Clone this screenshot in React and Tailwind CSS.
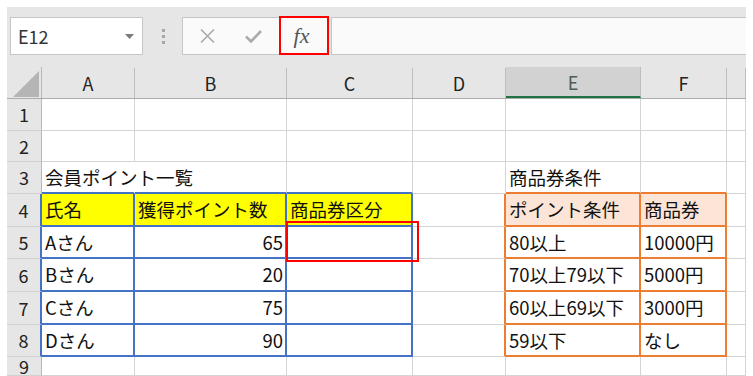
import React from "react";

const cols = [
  { key: "A", w: "w-[93px]" },
  { key: "B", w: "w-[152px]" },
  { key: "C", w: "w-[126px]" },
  { key: "D", w: "w-[93px]" },
  { key: "E", w: "w-[135px]" },
  { key: "F", w: "w-[86px]" },
  { key: "G", w: "flex-1" },
];

const rows = [
  { n: 1, h: "h-[32px]", cells: {} },
  { n: 2, h: "h-[31px]", cells: {} },
  { n: 3, h: "h-[32px]", cells: { A: "会員ポイント一覧", E: "商品券条件" } },
  { n: 4, h: "h-[33px]", cells: { A: "氏名", B: "獲得ポイント数", C: "商品券区分", E: "ポイント条件", F: "商品券" } },
  { n: 5, h: "h-[32px]", cells: { A: "Aさん", B: "65", E: "80以上", F: "10000円" } },
  { n: 6, h: "h-[33px]", cells: { A: "Bさん", B: "20", E: "70以上79以下", F: "5000円" } },
  { n: 7, h: "h-[33px]", cells: { A: "Cさん", B: "75", E: "60以上69以下", F: "3000円" } },
  { n: 8, h: "h-[32px]", cells: { A: "Dさん", B: "90", E: "59以下", F: "なし" } },
  { n: 9, h: "h-[19px]", cells: {} },
];

const inBlue = (n, k) => n >= 4 && n <= 8 && (k === "A" || k === "B" || k === "C");
const inOrange = (n, k) => n >= 4 && n <= 8 && (k === "E" || k === "F");

function cellClass(n, k) {
  let right = "border-r border-r-[#d4d4d4]";
  if (inBlue(n, k)) right = "border-r-2 border-r-[#4472c4]";
  else if (inOrange(n, k) || (n >= 4 && n <= 8 && k === "D")) right = "border-r-2 border-r-[#ed7d31]";
  else if (n === 3 && k === "A") right = "border-r border-r-transparent";

  let bottom = "border-b border-b-[#d4d4d4]";
  if (inBlue(n, k) || (n === 3 && (k === "A" || k === "B" || k === "C"))) bottom = "border-b-2 border-b-[#4472c4]";
  else if (inOrange(n, k) || (n === 3 && (k === "E" || k === "F"))) bottom = "border-b-2 border-b-[#ed7d31]";

  let bg = "";
  if (n === 4 && inBlue(n, k)) bg = "bg-[#ffff00]";
  if (n === 4 && inOrange(n, k)) bg = "bg-[#fce4d6]";

  return `${right} ${bottom} ${bg}`;
}

export default function App() {
  return (
    <div className="relative w-[753px] h-[376px] overflow-hidden bg-white pl-[7px] pt-[7px] pr-[7px] font-['Noto_Sans_CJK_JP',sans-serif] text-[#111]">
      {/* formula bar */}
      <div className="flex h-[60px] items-start bg-[#e6e6e6] pt-[10px]">
        <div className="ml-[3px] flex h-[38px] w-[133px] items-center justify-between border border-[#c6c6c6] bg-white pl-[7px] pr-[8px]">
          <span className="text-[18px] text-[#333]">E12</span>
          <svg width="9" height="5" viewBox="0 0 9 5">
            <polygon points="0,0 9,0 4.5,5" fill="#7a7a7a" />
          </svg>
        </div>
        <div className="ml-[19px] mt-[12px] flex flex-col gap-[3px]">
          <div className="h-[3px] w-[3px] bg-[#a6a6a6]" />
          <div className="h-[3px] w-[3px] bg-[#a6a6a6]" />
          <div className="h-[3px] w-[3px] bg-[#a6a6a6]" />
        </div>
        <div className="ml-[17px] flex h-[38px] w-[147px] items-center border border-[#c6c6c6] bg-[#fafafa]">
          <div className="flex w-[46px] justify-center pl-[2px]">
            <svg width="15" height="14" viewBox="0 0 15 14">
              <path d="M1 0.5 L14 13.5 M14 0.5 L1 13.5" stroke="#ababab" strokeWidth="1.6" fill="none" />
            </svg>
          </div>
          <div className="flex w-[46px] justify-center pl-[2px]">
            <svg width="17" height="13" viewBox="0 0 17 13">
              <path d="M1 6.5 L6 11.5 L16 1" stroke="#ababab" strokeWidth="2.6" fill="none" />
            </svg>
          </div>
          <div className="flex flex-1 justify-center">
            <span className="font-['Liberation_Serif',serif] text-[22px] italic leading-none text-[#555]">fx</span>
          </div>
        </div>
        <div className="ml-[2px] h-[38px] flex-1 border border-[#c6c6c6] border-r-0 bg-[#fafafa]" />
      </div>

      {/* column headers */}
      <div className="flex h-[32px] border-b border-b-[#ababab] bg-[#e6e6e6]">
        <div className="flex w-[35px] items-end justify-end border-r border-r-[#b8b8b8] pb-[1px] pr-[2px]">
          <svg width="26" height="26" viewBox="0 0 26 26">
            <polygon points="26,0 26,26 0,26" fill="#b5b5b5" />
          </svg>
        </div>
        {cols.map((c) => (
          <div
            key={c.key}
            className={`${c.w} flex items-center justify-center pt-[1px] text-[18px] ${
              c.key === "E"
                ? "border-b-2 border-b-[#217346] bg-[#d2d2d2] text-[#4b5e50]"
                : "mt-[1px] border-r border-r-[#bdbdbd] text-[#222]"
            } ${c.key === "E" ? "border-r border-r-[#bdbdbd]" : ""}`}
          >
            {c.key === "G" ? "" : c.key}
          </div>
        ))}
      </div>

      {/* rows */}
      {rows.map((r) => (
        <div key={r.n} className={`flex ${r.h}`}>
          <div
            className={`flex w-[35px] items-center justify-center bg-[#e6e6e6] text-[18px] text-[#222] border-b border-b-[#d0d0d0] ${
              r.n >= 4 && r.n <= 8 ? "border-r-2 border-r-[#4472c4]" : "border-r border-r-[#b8b8b8]"
            }`}
          >
            {r.n}
          </div>
          {cols.map((c) => {
            const text = r.cells[c.key];
            const right = c.key === "B" && r.n >= 5;
            return (
              <div
                key={c.key}
                className={`${c.w} flex items-center whitespace-nowrap text-[18.5px] leading-none ${
                  right ? "justify-end pr-[2px]" : "pl-[3px]"
                } ${cellClass(r.n, c.key)}`}
              >
                {text}
              </div>
            );
          })}
        </div>
      ))}

      {/* annotation boxes */}
      <div className="absolute left-[279px] top-[16px] h-[39px] w-[50px] border-2 border-[#ff0000]" />
      <div className="absolute left-[286px] top-[221px] h-[41px] w-[133px] border-2 border-[#ff0000]" />
    </div>
  );
}
